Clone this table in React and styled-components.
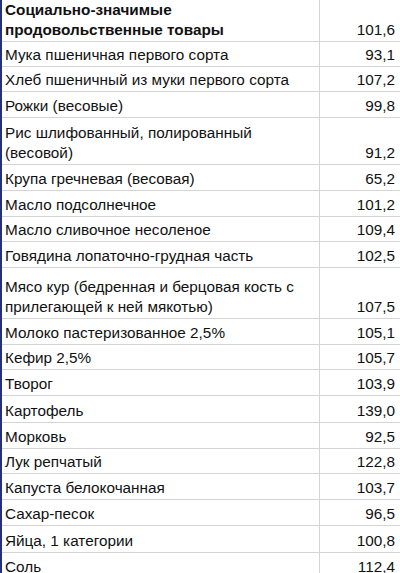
import React from "react";
import styled, { createGlobalStyle } from "styled-components";

const Global = createGlobalStyle`
  html, body {
    margin: 0;
    padding: 0;
    background: #ffffff;
  }
  body {
    font-family: "Liberation Sans", Arial, sans-serif;
    color: #111111;
  }
`;

const Sheet = styled.div`
  width: 400px;
  height: 573px;
  overflow: hidden;
  border-left: 2px solid #25307a;
  box-sizing: border-box;
  font-size: 15.3px;
  line-height: 20px;
`;

const Row = styled.div`
  display: grid;
  grid-template-columns: 317px 1fr;
  height: ${(p) => p.$h}px;
  box-sizing: border-box;
  border-bottom: 1px solid #d4d4d4;
  font-weight: ${(p) => (p.$bold ? 700 : 400)};
`;

const NameCell = styled.div`
  display: flex;
  align-items: flex-end;
  padding: 0 4px 1px 3px;
  box-sizing: border-box;
`;

const ValueCell = styled.div`
  display: flex;
  align-items: flex-end;
  justify-content: flex-end;
  padding: 0 5px 1px 0;
  border-left: 1px solid #d4d4d4;
  font-weight: 400;
`;

const rows = [
  ["Мука пшеничная первого сорта", "93,1", 25],
  ["Хлеб пшеничный из муки первого сорта", "107,2", 25],
  ["Рожки (весовые)", "99,8", 26],
  ["Рис шлифованный, полированный (весовой)", "91,2", 47],
  ["Крупа гречневая (весовая)", "65,2", 26],
  ["Масло подсолнечное", "101,2", 26],
  ["Масло сливочное несоленое", "109,4", 25],
  ["Говядина лопаточно-грудная часть", "102,5", 26],
  ["Мясо кур (бедренная и берцовая кость с прилегающей к ней мякотью)", "107,5", 51],
  ["Молоко пастеризованное 2,5%", "105,1", 26],
  ["Кефир 2,5%", "105,7", 25],
  ["Творог", "103,9", 26],
  ["Картофель", "139,0", 27],
  ["Морковь", "92,5", 26],
  ["Лук репчатый", "122,8", 25],
  ["Капуста белокочанная", "103,7", 26],
  ["Сахар-песок", "96,5", 26],
  ["Яйца, 1 категории", "100,8", 27],
  ["Соль", "112,4", 26],
];

export default function App() {
  return (
    <>
      <Global />
      <Sheet>
        <Row $h={42} $bold>
          <NameCell>Социально-значимые продовольственные товары</NameCell>
          <ValueCell>101,6</ValueCell>
        </Row>
        {rows.map(([name, value, h]) => (
          <Row key={name} $h={h}>
            <NameCell>{name}</NameCell>
            <ValueCell>{value}</ValueCell>
          </Row>
        ))}
      </Sheet>
    </>
  );
}
